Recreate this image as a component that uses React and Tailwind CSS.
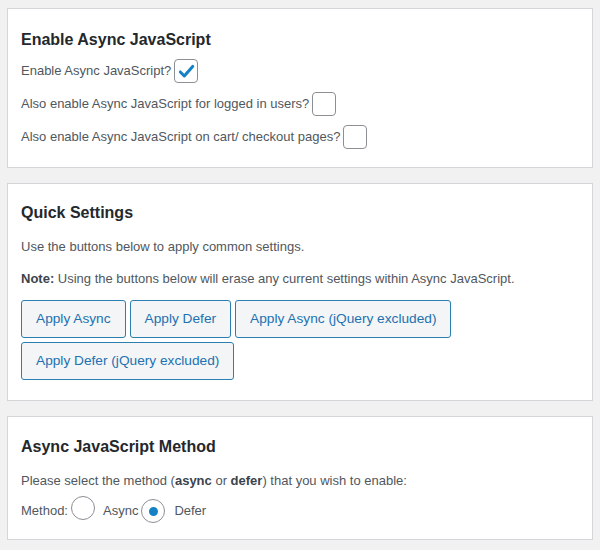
import { useState } from "react";

function Checkbox({ checked }) {
  return (
    <span className="ml-[3px] inline-flex h-[24px] w-[24px] items-center justify-center rounded-[4px] border border-[#8c8f94] bg-white">
      {checked && (
        <svg width="19" height="19" viewBox="0 0 20 20">
          <path d="M3.5 10.5l4.2 4.2 8.8-10" fill="none" stroke="#1582c5" strokeWidth="3.2" strokeLinecap="round" strokeLinejoin="round" />
        </svg>
      )}
    </span>
  );
}

function Radio({ checked }) {
  return (
    <span className="inline-flex h-[24px] w-[24px] items-center justify-center rounded-full border border-[#8c8f94] bg-white">
      {checked && <span className="h-[9px] w-[9px] rounded-full bg-[#1582c5]" />}
    </span>
  );
}

function Card({ className, children }) {
  return <div className={"border border-[#d4d5d8] bg-white px-[13px] " + className}>{children}</div>;
}

export default function App() {
  const [buttons] = useState([
    "Apply Async",
    "Apply Defer",
    "Apply Async (jQuery excluded)",
    "Apply Defer (jQuery excluded)",
  ]);

  return (
    <div className="min-h-[550px] bg-[#f1f1f1] px-[7px] pt-[8px] font-['Liberation_Sans',Arial,sans-serif] text-[13px] text-[#50575e]">
      {/* Enable */}
      <Card className="pt-[19px] pb-[18px]">
        <h2 className="text-[16px] font-semibold leading-[24px] text-[#23282d]">Enable Async JavaScript</h2>
        <div className="mt-[7px] flex flex-col gap-[9px]">
          <label className="flex h-[24px] items-center">
            Enable Async JavaScript?
            <Checkbox checked />
          </label>
          <label className="flex h-[24px] items-center">
            Also enable Async JavaScript for logged in users?
            <Checkbox />
          </label>
          <label className="flex h-[24px] items-center">
            Also enable Async JavaScript on cart/ checkout pages?
            <Checkbox />
          </label>
        </div>
      </Card>

      {/* Quick settings */}
      <Card className="mt-[15px] pt-[17px] pb-[20px]">
        <h2 className="text-[16px] font-semibold leading-[24px] text-[#23282d]">Quick Settings</h2>
        <p className="mt-[12px] leading-[20px]">Use the buttons below to apply common settings.</p>
        <p className="mt-[12px] leading-[20px]">
          <b className="text-[#3c434a]">Note:</b> Using the buttons below will erase any current settings within Async JavaScript.
        </p>
        <div className="mt-[11px] flex flex-wrap gap-[4px]">
          {buttons.map((b) => (
            <button
              key={b}
              className="h-[38px] rounded-[3px] border border-[#2a7fb0] bg-[#f3f5f6] px-[14px] text-[13.7px] text-[#2271b1]"
            >
              {b}
            </button>
          ))}
        </div>
      </Card>

      {/* Method */}
      <Card className="mt-[15px] pt-[18px] pb-[16px]">
        <h2 className="text-[16px] font-semibold leading-[24px] text-[#23282d]">Async JavaScript Method</h2>
        <p className="mt-[12px] leading-[20px]">
          Please select the method (<b className="text-[#3c434a]">async</b> or <b className="text-[#3c434a]">defer</b>) that you wish to enable:
        </p>
        <div className="mt-[8px] flex h-[24px] items-center">
          <span>Method:</span>
          <span className="ml-[3px]"><Radio /></span>
          <span className="ml-[8px]">Async</span>
          <span className="ml-[3px]"><Radio checked /></span>
          <span className="ml-[9px]">Defer</span>
        </div>
      </Card>
    </div>
  );
}
